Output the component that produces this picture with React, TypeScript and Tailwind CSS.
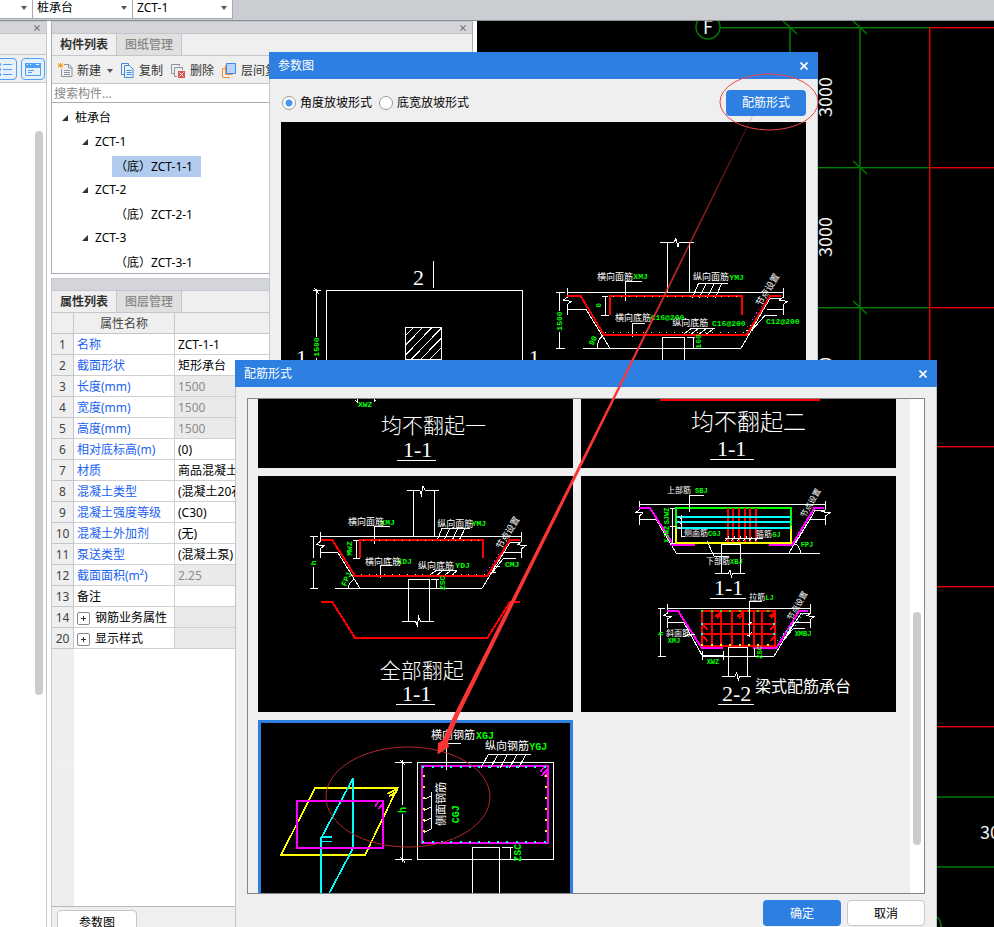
import type { ReactNode } from "react"

const WHITE = "#ffffff"
const RED = "#ff0000"
const GREEN = "#00ff00"
const YELLOW = "#ffff00"
const CYAN = "#00ffff"
const MAGENTA = "#ff00ff"

const properties = [
  { no: 1, name: "名称", value: "ZCT-1-1" },
  { no: 2, name: "截面形状", value: "矩形承台" },
  { no: 3, name: "长度(mm)", value: "1500", locked: true },
  { no: 4, name: "宽度(mm)", value: "1500", locked: true },
  { no: 5, name: "高度(mm)", value: "1500", locked: true },
  { no: 6, name: "相对底标高(m)", value: "(0)" },
  { no: 7, name: "材质", value: "商品混凝土" },
  { no: 8, name: "混凝土类型", value: "(混凝土20石)" },
  { no: 9, name: "混凝土强度等级", value: "(C30)" },
  { no: 10, name: "混凝土外加剂", value: "(无)" },
  { no: 11, name: "泵送类型", value: "(混凝土泵)" },
  { no: 12, name: "截面面积(m²)", value: "2.25", locked: true },
  { no: 13, name: "备注", value: "", plain: true },
  { no: 14, name: "钢筋业务属性", value: "", group: true },
  { no: 20, name: "显示样式", value: "", group: true },
]

const tree = [
  { name: "ZCT-1", child: "（底）ZCT-1-1", selected: true },
  { name: "ZCT-2", child: "（底）ZCT-2-1" },
  { name: "ZCT-3", child: "（底）ZCT-3-1" },
]

/* ---------- drawing helpers (3 units = 1 pixel) ---------- */

function Line({ d, c = WHITE, w = 3, dash }: { d: string; c?: string; w?: number; dash?: string }) {
  return <path d={d} stroke={c} strokeWidth={w} strokeDasharray={dash} fill="none" shapeRendering="crispEdges" />
}

function Label({ x, y, c = WHITE, size = 27, r = 0, children }: { x: number; y: number; c?: string; size?: number; r?: number; children: ReactNode }) {
  return (
    <text
      x={x}
      y={y}
      fill={c}
      fontSize={size}
      transform={r ? `rotate(${r} ${x} ${y})` : undefined}
      className="font-['Noto_Sans_CJK_SC',sans-serif]"
    >
      {children}
    </text>
  )
}

function Code({ x, y, c = GREEN, size = 24, r = 0, children }: { x: number; y: number; c?: string; size?: number; r?: number; children: ReactNode }) {
  return (
    <text
      x={x}
      y={y}
      fill={c}
      fontSize={size}
      transform={r ? `rotate(${r} ${x} ${y})` : undefined}
      className="font-bold font-['Liberation_Mono',monospace]"
    >
      {children}
    </text>
  )
}

function Title({ x, y, size = 66, children }: { x: number; y: number; size?: number; children: ReactNode }) {
  return (
    <text x={x} y={y} fill={WHITE} fontSize={size} className="font-light font-['Liberation_Serif','Noto_Sans_CJK_SC',serif]">
      {children}
    </text>
  )
}

function Drawing({ viewBox, label, children }: { viewBox: string; label: string; children: ReactNode }) {
  return (
    <svg viewBox={viewBox} role="img" aria-label={label} className="block w-full bg-black">
      {children}
    </svg>
  )
}

/* ---------- drawings ---------- */

function ParamDrawing() {
  return (
    <Drawing viewBox="33 216 1575 720" label="矩形承台参数图">
      <Title x={429} y={706}>2</Title>
      <Line d="M490 633V714" />
      <Line d="M169 936V721H758V936" />
      <Line d="M130 721H153M139 717V862M139 925V936M132 714L147 732" />
      <Code x={148} y={920} r={-90}>1500</Code>
      <Title x={78} y={944}>1</Title>
      <Title x={776} y={944}>1</Title>
      <Line d="M406 832H515V928H406Z" />
      <Line d="M406 858L430 832M406 886L458 832M406 916L486 832M424 928L515 833M452 928L515 863M480 928L515 892" />
      <g transform="translate(840 0)">
        <Line d="M330 577H372L378 566L384 590L388 577H432M352 577V728M418 577V728M52 728H700" />
        <Line d="M52 714V742L40 750L64 754L52 764V796M52 778H108L180 895" />
        <Line d="M700 714V742L688 750L712 754L700 764V796M700 778H650M99 895H573L660 745H692" />
        <Line d="M18 728H44M29 728V782M29 846V895M18 895H44" />
        <Line d="M165 738V796M156 738H174M154 796H176" />
        <Line d="M337 936V862H404V936M412 862H436M429 862V895M142 895Q142 868 158 858" />
        <Line d="M227 752V695H275M248 860V820H284" />
        <Line d="M427 743L445 701H533M448 743L468 701M472 743L492 701M496 743L515 701" />
        <Line d="M402 852L424 835H494M424 852L446 835M448 852L470 835M470 852L492 835" />
        <Line d="M681 796H645L606 840M600 826H622M588 841H610" />
        <Line d="M52 738H92L162 855H590L660 738H692M180 796V738H576V796" c={RED} w={6} />
        <Line d="M190 740H570" c={YELLOW} dash="3 20" />
        <Line d="M165 848H592" c={YELLOW} dash="3 20" />
        <Line d="M592 830L640 760" c={MAGENTA} dash="3 9" />
        <Label x={141} y={689}>横向面筋</Label>
        <Code x={250} y={688}>XMJ</Code>
        <Label x={429} y={691}>纵向面筋</Label>
        <Code x={538} y={690}>YMJ</Code>
        <Code x={302} y={811}>C16@200</Code>
        <Label x={195} y={814}>横向底筋</Label>
        <Label x={367} y={829}>纵向底筋</Label>
        <Code x={486} y={827}>C16@200</Code>
        <Code x={648} y={821}>C12@200</Code>
        <Label x={632} y={770} r={-58}>节点设置</Label>
        <Code x={37} y={842} r={-90}>1500</Code>
        <Code x={153} y={773} r={-90}>0</Code>
        <Code x={130} y={888} r={-65}>90</Code>
        <Code x={453} y={896} r={-90}>100</Code>
      </g>
    </Drawing>
  )
}

function FlatOne() {
  return (
    <Drawing viewBox="69 117 945 207" label="均不翻起一">
      <Line d="M360 121L366 125V117M423 121L417 125V117" />
      <Code x={369} y={141}>XWZ</Code>
      <Title x={438} y={218} size={63}>均不翻起一</Title>
      <Title x={504} y={290}>1-1</Title>
      <Line d="M486 301H603" />
    </Drawing>
  )
}

function FlatTwo() {
  return (
    <Drawing viewBox="0 0 945 207" label="均不翻起二">
      <Line d="M237 0L243 4H711L717 0" c={RED} w={6} />
      <Title x={330} y={93} size={69}>均不翻起二</Title>
      <Title x={408} y={171}>1-1</Title>
      <Line d="M387 181H519" />
    </Drawing>
  )
}

function AllTurned() {
  return (
    <Drawing viewBox="9 18 945 708" label="全部翻起">
      <Line d="M456 61H494L499 75L504 47L510 61H552M475 61V199M538 61V199M196 199H800" />
      <Line d="M196 186V214L184 224L208 227L196 236V263M196 247H248L315 355" />
      <Line d="M800 186V214L788 224L812 227L800 236V263M748 247H800M240 355H681L765 217H796" />
      <Line d="M164 199H190M176 199V265M176 290V355M164 355H190" />
      <Line d="M303 211V265M294 211H312M294 265H316M280 355Q280 338 298 328" />
      <Line d="M460 455V328H523V455M441 455H482L487 467L491 441L497 455H538M528 328H552M545 328V355" />
      <Line d="M358 222V169H406M376 324V286H410" />
      <Line d="M545 214L561 175H645M565 214L584 175M590 214L608 175M611 214L630 175" />
      <Line d="M522 317L544 301H607M544 317L564 301M567 317L588 301M588 317L607 301" />
      <Line d="M783 265H745L712 308M712 290H736M698 306H722" />
      <Line d="M198 210H232L300 318H697L765 210H796M315 263V211H684V263" c={RED} w={6} />
      <Line d="M198 396H232L300 504H697L765 396H796" c={RED} w={6} />
      <Line d="M325 212H684" c={YELLOW} dash="3 20" />
      <Line d="M318 313H697" c={YELLOW} dash="3 20" />
      <Line d="M697 304L740 240" c={MAGENTA} dash="3 9" />
      <Code x={376} y={166}>XMJ</Code>
      <Label x={279} y={166}>横向面筋</Label>
      <Label x={547} y={170}>纵向面筋</Label>
      <Code x={650} y={167}>YMJ</Code>
      <Code x={427} y={281}>XDJ</Code>
      <Label x={330} y={284}>横向底筋</Label>
      <Label x={489} y={296}>纵向底筋</Label>
      <Code x={601} y={293}>YDJ</Code>
      <Code x={750} y={290}>CMJ</Code>
      <Label x={738} y={239} r={-58}>节点设置</Label>
      <Code x={290} y={257} r={-90}>MWZ</Code>
      <Code x={183} y={286} r={-90}>h</Code>
      <Code x={272} y={350} r={-65}>FPJ</Code>
      <Code x={569} y={360} r={-90}>ZSC</Code>
      <Title x={374} y={624} size={63}>全部翻起</Title>
      <Title x={441} y={694}>1-1</Title>
      <Line d="M423 703H540" />
    </Drawing>
  )
}

function BeamType() {
  return (
    <Drawing viewBox="18 18 945 708" label="梁式配筋承台">
      {/* 1-1 */}
      <Line d="M193 103H751M193 93V120L183 127L204 129L193 138V165M193 148H243L304 250H735" />
      <Line d="M751 93V120L740 125L765 128L751 138V165M751 148H705L642 248M738 122H751M662 220L720 122H740M662 222Q676 232 676 250" />
      <Line d="M193 114H225L291 218V224H360M582 224H652L718 114H748" c={MAGENTA} w={6} />
      <Line d="M303 168V114H648V168" c={GREEN} w={6} />
      <Line d="M303 168V219H648V168" c={YELLOW} w={6} />
      <Line d="M459 114V217M475 114V217M492 114V217M510 114V217M525 114V217M543 114V217" c={RED} w={6} />
      <Line d="M303 141H648M303 156H648M303 174H648" c={CYAN} w={6} />
      <Line d="M293 114V220M284 115H300M284 168H300M284 220H300M343 126V76H387" />
      <Line d="M320 136V198H330M308 138L320 147M308 153L320 162M308 170L320 179M396 212L417 259H462" />
      <Line d="M450 205H564M452 212L462 200M470 212L480 200M488 212L498 200M506 212L516 200M522 212L532 200M540 212L550 200" />
      <Line d="M440 310V223H496V310M420 310H460L465 300L469 320L473 310H510" />
      <Label x={276} y={70} size={24}>上部筋</Label>
      <Code x={360} y={69} size={21}>SBJ</Code>
      <Label x={327} y={198} size={24}>侧面筋</Label>
      <Code x={399} y={197} size={21}>CGJ</Code>
      <Label x={543} y={202} size={24}>箍筋</Label>
      <Code x={592} y={201} size={21}>GJ</Code>
      <Label x={393} y={283} size={24}>下部筋</Label>
      <Code x={465} y={282} size={21}>XBJ</Code>
      <Code x={677} y={231} size={21}>FPJ</Code>
      <Code x={282} y={163} size={21} r={-90}>SJWZ</Code>
      <Code x={282} y={218} size={21} r={-90}>XJWZ</Code>
      <Label x={690} y={145} size={24} r={-60}>节点设置</Label>
      <Title x={417} y={374}>1-1</Title>
      <Line d="M405 385H512" />
      {/* 2-2 */}
      <Line d="M276 415H706M276 403V430L266 437L288 440L276 448V474M276 457H326L383 559H597" />
      <Line d="M706 403V430L696 437L717 440L706 448V474M706 457H657L597 559M617 525L678 430H706M690 475H655L625 512" />
      <Line d="M250 415H270M257 415V559M248 559H272M383 542V570M445 542V570M383 556H445" />
      <Line d="M276 424H310L380 534H444M535 534H604L672 424H700" c={MAGENTA} w={6} />
      <Line d="M382 424H600V528H382ZM412 424V528M437 424V528M472 424V528M503 424V528M538 424V528M562 424V528M382 462H600M382 493H600" c={RED} w={6} />
      <Line d="M420 440L438 428M426 444L440 434M485 440L503 428M492 444L505 434M582 440L598 428M588 444L600 434M384 464L398 480M384 498L398 514M600 464L586 480M600 498L586 514" c={RED} w={6} />
      <Line d="M379 424H600" c={GREEN} w={6} dash="6 22" />
      <Line d="M379 524H600" c={YELLOW} w={6} dash="6 22" />
      <Line d="M379 463H385M379 493H385M593 463H599M593 493H599" c={CYAN} w={6} />
      <Line d="M655 478L690 420M606 512L648 470" c={CYAN} dash="3 10" />
      <Line d="M523 502V394H560M518 466L530 456M518 498L530 488M325 500L340 494H360" />
      <Line d="M460 619V532H517V619M441 619H480L485 608L490 631L494 619H528M539 534V559" />
      <Label x={523} y={391} size={24}>拉筋</Label>
      <Code x={571} y={390} size={21}>LJ</Code>
      <Label x={273} y={497} size={24}>斜面筋</Label>
      <Code x={278} y={520} size={21}>XMJ</Code>
      <Code x={659} y={498} size={21}>XMBJ</Code>
      <Code x={395} y={581} size={21}>XWZ</Code>
      <Code x={562} y={566} size={21} r={-90}>ZSC</Code>
      <Code x={263} y={497} size={21} r={-90}>h</Code>
      <Label x={650} y={453} size={24} r={-60}>节点设置</Label>
      <Title x={441} y={692}>2-2</Title>
      <Line d="M429 703H537" />
      <Label x={540} y={666} size={48}>梁式配筋承台</Label>
    </Drawing>
  )
}

function HoopType() {
  return (
    <Drawing viewBox="9 15 945 708" label="环式配筋承台">
      <Line d="M181 218H428L330 420H78Z" c={YELLOW} w={5} />
      <Line d="M397 236L426 222M402 243L424 230M410 244L428 224" c={YELLOW} w={5} />
      <Line d="M198 560V370L294 190V400L210 558" c={CYAN} w={5} />
      <Line d="M198 366H231M198 379H231" c={CYAN} w={5} />
      <Line d="M126 258H384V399H126Z" c={MAGENTA} w={6} />
      <Line d="M360 274L370 261M370 283L384 265" c={MAGENTA} w={5} />
      <Line d="M487 142H895V433H487Z" />
      <Line d="M420 142H470M443 136V270M443 298V440M420 433H470M434 134L450 150M434 425L450 442" />
      <Line d="M501 153H880V384H501Z" c={MAGENTA} w={6} />
      <Line d="M856 170L868 156M860 182L878 162M868 186L880 172" c={MAGENTA} w={5} />
      <Line d="M502 157H876M502 380H876" c={CYAN} w={6} dash="6 22" />
      <Line d="M506 181V356M874 181V356" c={YELLOW} w={6} dash="6 27" />
      <Line d="M575 165V86H618" />
      <Line d="M677 160L700 118H828M706 160L729 118M735 160L757 118M763 160L786 118M790 160L813 118" />
      <Line d="M529 231V342L508 352M529 243L508 252M529 276L508 286M529 309L508 319" />
      <Line d="M652 560V397H734V560M741 397H775M765 397V436M758 434H771" />
      <Label x={528} y={72} size={33}>横向钢筋</Label>
      <Code x={663} y={73} size={30}>XGJ</Code>
      <Label x={690} y={105} size={33}>纵向钢筋</Label>
      <Code x={823} y={106} size={30}>YGJ</Code>
      <Label x={570} y={333} size={33} r={-90}>侧面钢筋</Label>
      <Code x={611} y={325} size={30} r={-90}>CGJ</Code>
      <Code x={452} y={294} size={30} r={-90}>h</Code>
      <Code x={797} y={440} size={30} r={-90}>ZSC</Code>
      <path d="M13.500 19.500H949.500V718.500H13.500Z" stroke="#2d80e1" strokeWidth={9} fill="none" />
    </Drawing>
  )
}

/* axis grid of the model view */
function PlanView() {
  return (
    <svg viewBox="477 21 517 906" preserveAspectRatio="xMinYMin slice" role="img" aria-label="轴网" className="h-full w-full">
      <g fill="none" shapeRendering="crispEdges">
        <path d="M720 28.500H930M800 168.500H930M800 308.500H930" stroke="#003000" />
        <path d="M720 27.500H930M800 167.500H930M800 307.500H930" stroke="#008000" />
        <path d="M790 28V70M860 28V400M930 797H994M930 867H994" stroke="#005c00" strokeWidth="2" />
        <path d="M930.500 28V400M930 28.500H994M930 168.500H994M930 308.500H994M930 447.500H994M930 587.500H994M930 727.500H994" stroke="#600000" />
        <path d="M929.500 28V400M930 27.500H994M930 167.500H994M930 307.500H994M930 446.500H994M930 586.500H994M930 726.500H994" stroke="#e80000" />
      </g>
      <g fill="none" stroke="#007800" strokeWidth="1.500">
        <path d="M783 21L797 34M853 21L867 34M853 161L867 174M853 301L867 314" />
        <circle cx="708" cy="27" r="12" />
        <circle cx="929" cy="926" r="12" />
      </g>
      <g fill="#f2f2f2" className="font-['Noto_Sans_CJK_SC',sans-serif] text-[18px]">
        <text x="703" y="34">F</text>
        <text transform="translate(832 117) rotate(-90)">3000</text>
        <text transform="translate(832 257) rotate(-90)">3000</text>
        <text transform="translate(832 397) rotate(-90)">3000</text>
        <text x="980" y="839">3000</text>
      </g>
    </svg>
  )
}

/* ---------- small parts ---------- */

function Cross({ className = "h-2 w-2" }: { className?: string }) {
  return (
    <svg viewBox="0 0 8 8" className={className} fill="none" stroke="currentColor" strokeWidth="1.6">
      <path d="M.5.5l7 7M7.500.5l-7 7" />
    </svg>
  )
}

function Caret({ className = "" }: { className?: string }) {
  return (
    <svg viewBox="0 0 6 4" className={`h-1 w-1.5 ${className}`} fill="#555">
      <path d="M0 0h6L3 4z" />
    </svg>
  )
}

function TopSelect({ value, label, width }: { value: string; label: string; width: string }) {
  return (
    <div className={`relative -ml-px h-[19px] border border-t-0 border-[#a8abb0] bg-white ${width}`}>
      <select aria-label={label} className="block h-4 w-full appearance-none bg-transparent pl-1 leading-4 outline-none">
        <option>{value}</option>
      </select>
      <Caret className="pointer-events-none absolute top-1.5 right-[5px]" />
    </div>
  )
}

function PanelBar() {
  return (
    <div className="flex h-[13px] shrink-0 items-center justify-end border-y border-[#c3c6cc] bg-[#d3d5da] pr-1.5">
      <button aria-label="关闭" className="text-[#777]">
        <Cross className="h-1.5 w-1.5" />
      </button>
    </div>
  )
}

function Tabs({ active, other }: { active: string; other: string }) {
  return (
    <div role="tablist" className="flex h-[22px] shrink-0 border-b border-[#c3c6cc]">
      <button role="tab" aria-selected="true" className="w-[65px] border-r border-[#c3c6cc] pt-px font-bold text-[#333]">
        {active}
      </button>
      <button role="tab" aria-selected="false" className="w-[65px] border-r border-[#c3c6cc] bg-[#e0e0e0] pt-px font-medium text-[#888]">
        {other}
      </button>
    </div>
  )
}

function Twisty() {
  return (
    <svg viewBox="0 0 6 6" className="h-1.5 w-1.5 shrink-0" fill="#333">
      <path d="M6 0v6H0z" />
    </svg>
  )
}

function NewIcon() {
  return (
    <svg viewBox="0 0 15 15" className="h-[15px] w-[15px]" fill="none" stroke="#8a949c">
      <path d="M6 1.500h5l3 3v9H3.500V6M10.500 1.500V5H14M6 7.500h6M6 9.500h6M6 11.500h6" />
      <path d="M0 .5l5 4M5 .5l-5 4M2.500 0v5M0 2.500h5" stroke="#f5a11c" />
    </svg>
  )
}

function CopyIcon() {
  return (
    <svg viewBox="0 0 13 15" className="h-[15px] w-[13px]" fill="none" stroke="#3f8be0">
      <path d="M3 11.500H.5V.5h7V2M3.500 2.500h5l3.500 3.500v8.500H3.500zM5.500 7.500h5M5.500 9.500h5M5.500 11.500h5" />
    </svg>
  )
}

function DeleteIcon() {
  return (
    <svg viewBox="0 0 14 14" className="h-3.5 w-3.5" fill="none" stroke="#8a949c">
      <path d="M3 9.500H.5V.5h8V2M6 12.500H3.500v-9h8V6" />
      <path d="M7 7h7v7H7z" fill="#d9534f" stroke="none" />
      <path d="M8.500 8.500l4 4M12.500 8.500l-4 4" stroke="#fff" />
    </svg>
  )
}

function FloorCopyIcon() {
  return (
    <svg viewBox="0 0 14 15" className="h-[15px] w-3.5" fill="none">
      <path d="M3 5.500H.5v9H8M3.500 2.500v9h7" stroke="#f08a3c" />
      <path d="M4.500.5h9v10h-9z" fill="#b8d6fb" stroke="#3f8be0" />
    </svg>
  )
}

function DialogTitle({ children }: { children: string }) {
  return (
    <header className="flex h-[27px] shrink-0 items-center justify-between bg-[#2d80e1] pr-2.5 pl-[9px] text-white">
      <h2>{children}</h2>
      <button aria-label="关闭">
        <Cross />
      </button>
    </header>
  )
}

/* ---------- panels ---------- */

function LeftStrip() {
  return (
    <aside className="flex w-[47px] shrink-0 flex-col border-r border-[#c3c6cc] bg-white">
      <PanelBar />
      <div className="h-[21px] border-b border-[#c3c6cc] bg-[#efefef]" />
      <div className="flex h-7 items-center justify-end gap-1 border-b border-[#c3c6cc] bg-[#efefef] pr-px">
        <button aria-label="列表" className="-ml-2 flex h-[22px] w-6 items-center justify-center rounded-sm border border-[#4ea0f5] bg-[#e6f1fd]">
          <svg viewBox="0 0 16 14" className="h-3.5 w-4" fill="none" stroke="#4ea0f5">
            <path d="M.5 1.500h3v2h-3zM.5 6.500h3v2h-3zM.5 11.500h3v2h-3zM6 2.500h9M6 7.500h9M6 12.500h9" />
          </svg>
        </button>
        <button aria-label="面板" className="flex h-[22px] w-6 items-center justify-center rounded-sm border border-[#4ea0f5] bg-[#e6f1fd]">
          <svg viewBox="0 0 16 14" className="h-3.5 w-4" fill="none" stroke="#4ea0f5">
            <path d="M.5 5.500h15v8H.5zM3 8.500h6M3 10.500h4" />
            <path d="M0 1h16v4H0z" fill="#4ea0f5" stroke="none" />
            <path d="M2 2.500h1M5 2.500h1M11 2.500h3" stroke="#fff" />
          </svg>
        </button>
      </div>
      <div className="flex flex-1 justify-end pt-12 pr-[3px]">
        <div className="h-[564px] w-2 rounded-full bg-[#ccc]" />
      </div>
    </aside>
  )
}

function ComponentPanel() {
  return (
    <section className="flex h-[253px] shrink-0 flex-col border-x border-b border-[#a9adb3] bg-[#efefef]">
      <PanelBar />
      <Tabs active="构件列表" other="图纸管理" />
      <div className="flex h-7 shrink-0 items-center border-b border-[#c3c6cc] pt-0.5 pl-1.5 text-[#333]">
        <button className="flex items-center gap-1">
          <NewIcon />
          新建
          <Caret className="ml-0.5" />
        </button>
        <button className="ml-2 flex items-center gap-[5px]">
          <CopyIcon />
          复制
        </button>
        <button className="ml-2 flex items-center gap-[5px]">
          <DeleteIcon />
          删除
        </button>
        <button className="ml-2 flex items-center gap-[5px]">
          <FloorCopyIcon />
          层间复制
        </button>
      </div>
      <input
        aria-label="搜索构件"
        placeholder="搜索构件..."
        className="h-[19px] shrink-0 border-b border-[#a9adb3] bg-white pl-0.5 outline-none placeholder:text-[#888]"
      />
      <ul className="min-h-0 flex-1 overflow-hidden bg-white pt-[3px] leading-6">
        <li>
          <div className="flex h-6 items-center gap-[7px] pl-2.5">
            <Twisty />
            桩承台
          </div>
          <ul>
            {tree.map((node) => (
              <li key={node.name}>
                <div className="flex h-6 items-center gap-[7px] pl-[30px]">
                  <Twisty />
                  {node.name}
                </div>
                <div className="flex h-6 items-center pl-[60px]">
                  <span className={`h-[21px] pr-2 pl-[3px] leading-[21px] ${node.selected ? "bg-[#b1ccee]" : ""}`}>{node.child}</span>
                </div>
              </li>
            ))}
          </ul>
        </li>
      </ul>
    </section>
  )
}

function PropertyPanel() {
  return (
    <section className="mt-1 flex min-h-0 flex-1 flex-col border-x border-[#c3c6cc] bg-[#efefef]">
      <PanelBar />
      <Tabs active="属性列表" other="图层管理" />
      <div className="min-h-0 flex-1 border-b border-[#b4b8be] bg-linear-to-r from-[#efefef] from-[22px] to-white to-[22px]">
        <table className="w-full table-fixed border-separate border-spacing-0">
          <thead>
            <tr className="h-[21px] bg-[#efefef] leading-[18px] text-[#444]">
              <th className="w-[22px] border-r border-b border-[#c3c6cc]" />
              <th className="w-[101px] border-r border-b border-[#c3c6cc] p-0 pt-0.5 font-normal">属性名称</th>
              <th className="border-b border-[#c3c6cc]" />
            </tr>
          </thead>
          <tbody>
            {properties.map((p) => (
              <tr key={p.no} className="h-[21px] leading-[18px]">
                <td className="border-r border-b border-[#c3c6cc] bg-[#efefef] p-0 pt-0.5 text-center text-[#444]">{p.no}</td>
                <td
                  className={`border-r border-b border-[#d0d0d0] bg-white p-0 pt-0.5 pl-[3px] whitespace-nowrap ${
                    p.group || p.plain ? "text-black" : "text-[#1a62f0]"
                  }`}
                >
                  {p.group ? (
                    <span className="flex items-center gap-[5px]">
                      <button aria-label={`展开${p.name}`} className="h-[13px] w-[13px] rounded-xs border border-[#888]">
                        <svg viewBox="0 0 11 11" className="h-[11px] w-[11px]" stroke="#333">
                          <path d="M5.500 3v5M3 5.500h5" />
                        </svg>
                      </button>
                      {p.name}
                    </span>
                  ) : (
                    p.name
                  )}
                </td>
                <td
                  className={`border-b border-[#d0d0d0] p-0 pt-0.5 pl-[3px] whitespace-nowrap ${
                    p.locked || p.group ? "bg-[#eaeaea] text-[#8c8c8c]" : "bg-white"
                  }`}
                >
                  {p.value}
                </td>
              </tr>
            ))}
          </tbody>
        </table>
      </div>
      <div className="h-5 shrink-0 overflow-hidden pt-[3px] pl-[5px]">
        <button className="h-[26px] w-20 rounded-sm border border-[#c3c6cc] bg-white">参数图</button>
      </div>
    </section>
  )
}

function ParamDialog() {
  return (
    <div role="dialog" aria-label="参数图" className="absolute top-[52px] left-[269px] w-[549px] bg-[#efefef]">
      <DialogTitle>参数图</DialogTitle>
      <div className="border-x border-[#c3c9d2]">
        <div className="flex h-[43px] items-center pt-1 pr-[11px] pl-3">
          <label className="flex items-center gap-1">
            <input
              type="radio"
              name="slope"
              defaultChecked
              className="h-3.5 w-3.5 appearance-none rounded-full border border-[#999] bg-white bg-radial checked:from-[#4a98f5] checked:from-[3px] checked:to-white checked:to-[4px]"
            />
            角度放坡形式
          </label>
          <label className="ml-[7px] flex items-center gap-1">
            <input type="radio" name="slope" className="h-3.5 w-3.5 appearance-none rounded-full border border-[#999] bg-white" />
            底宽放坡形式
          </label>
          <button className="ml-auto h-[26px] w-20 rounded-sm bg-[#2d80e1] pt-px text-white">配筋形式</button>
        </div>
        <div className="px-[11px]">
          <ParamDrawing />
        </div>
      </div>
    </div>
  )
}

function RebarDialog() {
  return (
    <div role="dialog" aria-label="配筋形式" className="absolute top-[360px] bottom-0 left-[235px] flex w-[702px] flex-col bg-[#efefef]">
      <DialogTitle>配筋形式</DialogTitle>
      <div className="flex min-h-0 flex-1 flex-col border-x border-[#bcc4d2] px-[11px] pt-[11px]">
        <div className="flex min-h-0 flex-1 border border-[#80848c]">
          <div className="min-h-0 flex-1 overflow-hidden pr-3.5 pl-2.5">
            <div className="grid auto-rows-max grid-cols-2 gap-2">
              <FlatOne />
              <FlatTwo />
              <AllTurned />
              <BeamType />
              <HoopType />
            </div>
          </div>
          <div className="w-3.5 bg-white pt-[213px] pl-[3px]">
            <div className="h-[233px] w-2 rounded-full bg-[#ccc]" />
          </div>
        </div>
        <footer className="flex shrink-0 justify-end gap-1.5 pt-1.5 pb-px">
          <button className="h-[26px] w-[78px] rounded-sm bg-[#2d80e1] pt-px text-white">确定</button>
          <button className="h-[26px] w-[78px] rounded-sm border border-[#c8c8c8] bg-white pt-px">取消</button>
        </footer>
      </div>
    </div>
  )
}

function Callouts() {
  return (
    <svg viewBox="0 0 994 927" className="pointer-events-none absolute top-0 left-0 h-[927px] w-[994px]" fill="none">
      <defs>
        <linearGradient id="fade" gradientUnits="userSpaceOnUse" x1="752" y1="116" x2="628" y2="370">
          <stop offset="0" stopColor="#fb3434" stopOpacity="0.3" />
          <stop offset="1" stopColor="#fb3434" />
        </linearGradient>
      </defs>
      <ellipse cx="769" cy="102" rx="49" ry="28" stroke="#ee4444" />
      <ellipse cx="408" cy="797" rx="82" ry="50" stroke="#b02a2a" />
      <path d="M753 116L629 370L459 715L448 742L449 747L437.500 754.500L438 743L442 741L454 715L627 369L752 116Z" fill="url(#fade)" />
    </svg>
  )
}

export default function App() {
  return (
    <div className="relative flex h-screen flex-col overflow-hidden bg-white font-['Noto_Sans','Noto_Sans_CJK_SC',sans-serif] text-xs text-black">
      <div className="flex h-[21px] shrink-0 border-b border-[#888c92] bg-[#cacdd2]">
        <TopSelect label="类别" value="" width="w-[34px]" />
        <TopSelect label="构件类型" value="桩承台" width="w-[101px]" />
        <TopSelect label="构件" value="ZCT-1" width="w-[101px]" />
      </div>
      <div className="flex min-h-0 flex-1">
        <LeftStrip />
        <div className="ml-1 flex w-[422px] shrink-0 flex-col">
          <ComponentPanel />
          <PropertyPanel />
        </div>
        <main className="ml-1 min-w-0 flex-1 bg-black">
          <PlanView />
        </main>
      </div>
      <ParamDialog />
      <RebarDialog />
      <Callouts />
    </div>
  )
}
